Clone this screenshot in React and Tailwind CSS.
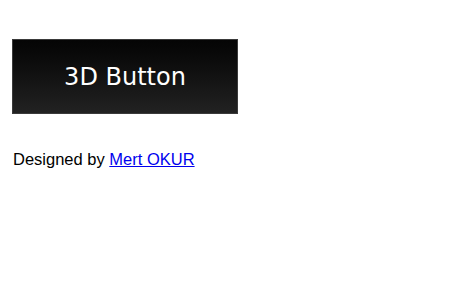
export default function App() {
  return (
    <div className="min-h-[285px] bg-white px-3 pt-[39px]">
      <button
        type="button"
        className="flex h-[75px] w-[226px] items-center justify-center border border-[#3a3a3a] bg-gradient-to-b from-[#050505] to-[#222222] pt-px text-[24px] text-white"
        style={{ fontFamily: '"DejaVu Sans", sans-serif' }}
      >
        3D Button
      </button>
      <p
        className="mt-[36px] pl-px text-[16.5px] leading-[18px] text-black"
        style={{ fontFamily: '"Liberation Sans", Arial, sans-serif' }}
      >
        Designed by{' '}
        <a href="#" className="text-[#0000ee] underline">
          Mert OKUR
        </a>
      </p>
    </div>
  );
}
